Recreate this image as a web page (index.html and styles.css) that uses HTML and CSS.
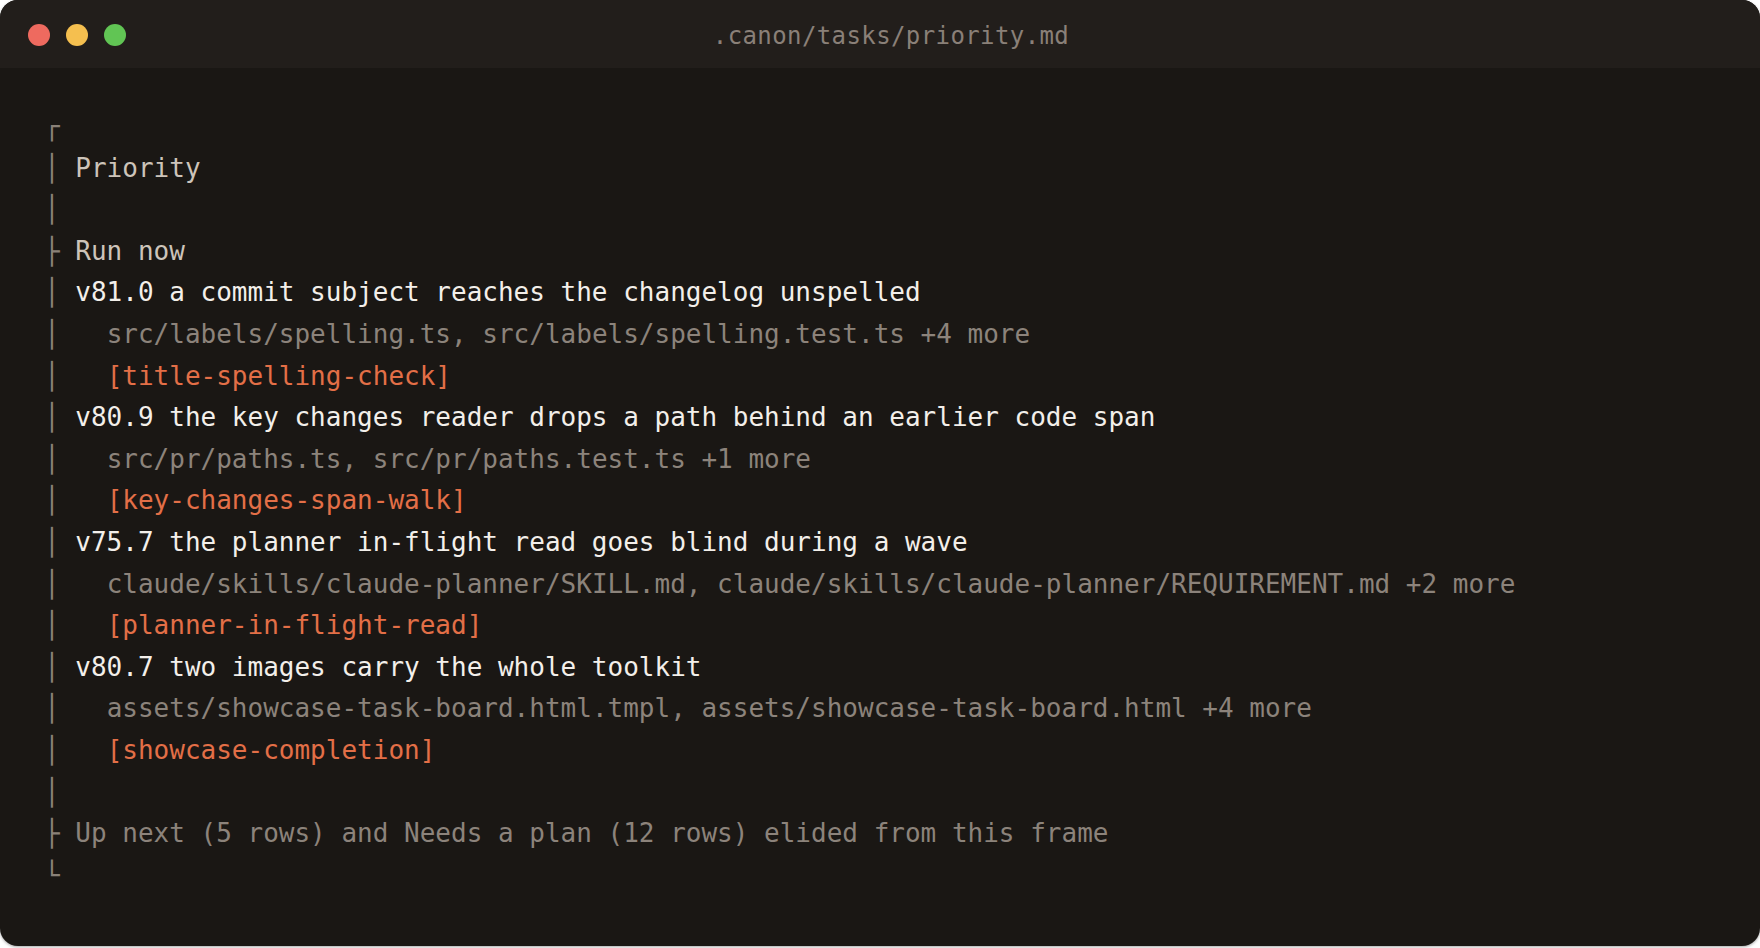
FILE: index.html
```html
<!DOCTYPE html>
<html>
<head>
<meta charset="utf-8">
<link rel="stylesheet" href="styles.css">
</head>
<body>
<div class="window">
  <div class="titlebar">
    <div class="lights">
      <span class="light red"></span>
      <span class="light yellow"></span>
      <span class="light green"></span>
    </div>
    <div class="title">.canon/tasks/priority.md</div>
  </div>
  <div class="content">
    <div class="line"><span class="box">┌</span></div>
    <div class="line"><span class="box">│</span> <span class="head">Priority</span></div>
    <div class="line"><span class="box">│</span></div>
    <div class="line"><span class="box">├</span> <span class="head">Run now</span></div>
    <div class="line"><span class="box">│</span> <span class="task">v81.0 a commit subject reaches the changelog unspelled</span></div>
    <div class="line"><span class="box">│</span>   <span class="files">src/labels/spelling.ts, src/labels/spelling.test.ts +4 more</span></div>
    <div class="line"><span class="box">│</span>   <span class="tag">[title-spelling-check]</span></div>
    <div class="line"><span class="box">│</span> <span class="task">v80.9 the key changes reader drops a path behind an earlier code span</span></div>
    <div class="line"><span class="box">│</span>   <span class="files">src/pr/paths.ts, src/pr/paths.test.ts +1 more</span></div>
    <div class="line"><span class="box">│</span>   <span class="tag">[key-changes-span-walk]</span></div>
    <div class="line"><span class="box">│</span> <span class="task">v75.7 the planner in-flight read goes blind during a wave</span></div>
    <div class="line"><span class="box">│</span>   <span class="files">claude/skills/claude-planner/SKILL.md, claude/skills/claude-planner/REQUIREMENT.md +2 more</span></div>
    <div class="line"><span class="box">│</span>   <span class="tag">[planner-in-flight-read]</span></div>
    <div class="line"><span class="box">│</span> <span class="task">v80.7 two images carry the whole toolkit</span></div>
    <div class="line"><span class="box">│</span>   <span class="files">assets/showcase-task-board.html.tmpl, assets/showcase-task-board.html +4 more</span></div>
    <div class="line"><span class="box">│</span>   <span class="tag">[showcase-completion]</span></div>
    <div class="line"><span class="box">│</span></div>
    <div class="line"><span class="box">├</span> <span class="files">Up next (5 rows) and Needs a plan (12 rows) elided from this frame</span></div>
    <div class="line"><span class="box">└</span></div>
  </div>
</div>
</body>
</html>
```

FILE: styles.css
```css
html, body {
  margin: 0;
  padding: 0;
  background: #d4d4d4;
}

body {
  width: 1760px;
  height: 948px;
  overflow: hidden;
  background: #ffffff;
}

.window {
  width: 1760px;
  height: 946px;
  border-radius: 18px;
  overflow: hidden;
  background: #1a1714;
  box-shadow: 0 1px 3px rgba(0, 0, 0, 0.35);
  font-family: "DejaVu Sans Mono", "Liberation Mono", monospace;
}

.titlebar {
  height: 68px;
  box-sizing: border-box;
  padding-top: 3px;
  background: #221e1b;
  display: flex;
  align-items: center;
  padding-left: 28px;
}

.lights {
  display: flex;
  gap: 16px;
  margin-top: -1px;
}

.light {
  width: 22px;
  height: 22px;
  border-radius: 50%;
  display: block;
}

.red { background: #ee6a5f; }
.yellow { background: #f5bf4f; }
.green { background: #61c554; }

.title {
  flex: 1;
  text-align: center;
  font-size: 24px;
  letter-spacing: 0.4px;
  color: #8a8078;
  padding-right: 104px;
}

.content {
  padding: 38px 44px 0;
  font-size: 26px;
  line-height: 41.6px;
}

.line {
  white-space: pre;
  height: 41.6px;
}

.box { color: #8a8178; }
.head { color: #cdc4ba; }
.task { color: #f3efea; }
.files { color: #8c837b; }
.tag { color: #e36f47; }
```
